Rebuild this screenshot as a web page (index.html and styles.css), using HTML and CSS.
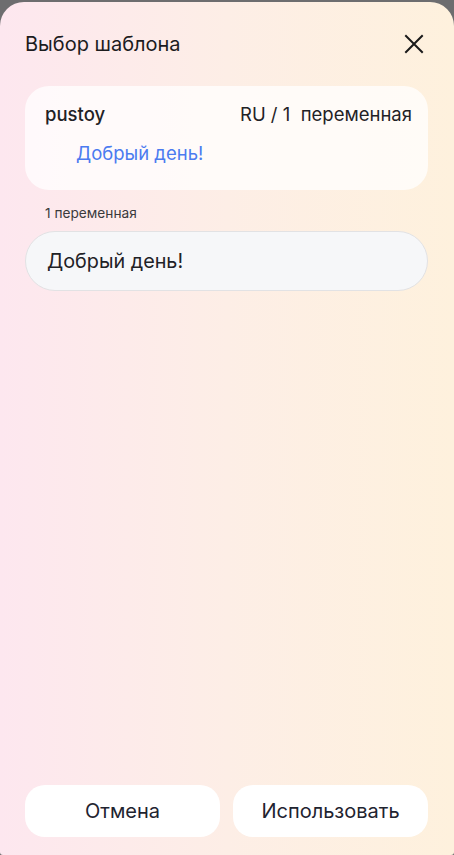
FILE: index.html
```html
<!DOCTYPE html>
<html lang="ru">
<head>
<meta charset="utf-8">
<link rel="stylesheet" href="styles.css">
</head>
<body>
<div class="modal">
  <div class="header">
    <h1 class="title">Выбор шаблона</h1>
    <button class="close" aria-label="Закрыть">
      <svg width="20" height="20" viewBox="0 0 20 20"><path d="M2 2L18 18M18 2L2 18" stroke="#1a1a1a" stroke-width="2" stroke-linecap="square" fill="none"/></svg>
    </button>
  </div>
  <div class="card">
    <div class="card-top">
      <span class="name">pustoy</span>
      <span class="meta">RU / 1&nbsp; переменная</span>
    </div>
    <div class="preview">Добрый день!</div>
  </div>
  <div class="var-label">1 переменная</div>
  <div class="input">Добрый день!</div>
  <div class="spacer"></div>
  <div class="actions">
    <button class="btn">Отмена</button>
    <button class="btn">Использовать</button>
  </div>
</div>
</body>
</html>
```
FILE: styles.css
```css
html, body {
  margin: 0;
  padding: 0;
  height: 100%;
}
body {
  background: #6d6d6f;
  font-family: Inter, "Noto Sans", sans-serif;
  padding-top: 2px;
  box-sizing: border-box;
}
.modal {
  height: 853px;
  box-sizing: border-box;
  border-radius: 24px 24px 3px 3px;
  background: linear-gradient(90deg, #fde7ef 0%, #fdeee6 50%, #fef1dd 100%);
  padding: 0 26px 18px 25px;
  display: flex;
  flex-direction: column;
}
.header {
  display: flex;
  align-items: center;
  justify-content: space-between;
  height: 84px;
}
.title {
  margin: 0;
  font-size: 20px;
  font-weight: 400;
  color: #1c1c1e;
}
.close {
  background: none;
  border: 0;
  padding: 0;
  margin-right: 4px;
  width: 20px;
  height: 20px;
  display: flex;
}
.card {
  background: rgba(255, 255, 255, 0.75);
  border-radius: 24px;
  padding: 16px 16px 0 20px;
  height: 104px;
  box-sizing: border-box;
}
.card-top {
  display: flex;
  justify-content: space-between;
  align-items: center;
  font-size: 18.5px;
  color: #1f2226;
  line-height: 24px;
}
.name {
  font-weight: 500;
}
.preview {
  margin-top: 15px;
  padding-left: 31px;
  color: #4b7bf0;
  font-size: 18.5px;
  line-height: 24px;
}
.var-label {
  margin: 14px 0 0 20px;
  font-size: 13.7px;
  color: #3a3a3c;
  line-height: 18px;
}
.input {
  margin-top: 9px;
  height: 60px;
  box-sizing: border-box;
  border-radius: 30px;
  background: #f6f7f9;
  border: 1px solid #e2e2e4;
  display: flex;
  align-items: center;
  padding-left: 21px;
  font-size: 19.8px;
  color: #1f2226;
}
.spacer {
  flex: 1;
}
.actions {
  display: flex;
  gap: 13px;
}
.btn {
  flex: 1;
  height: 52px;
  border: 0;
  border-radius: 20px;
  background: #ffffff;
  font-family: Inter, "Noto Sans", sans-serif;
  font-size: 20px;
  color: #1f2430;
}
```
